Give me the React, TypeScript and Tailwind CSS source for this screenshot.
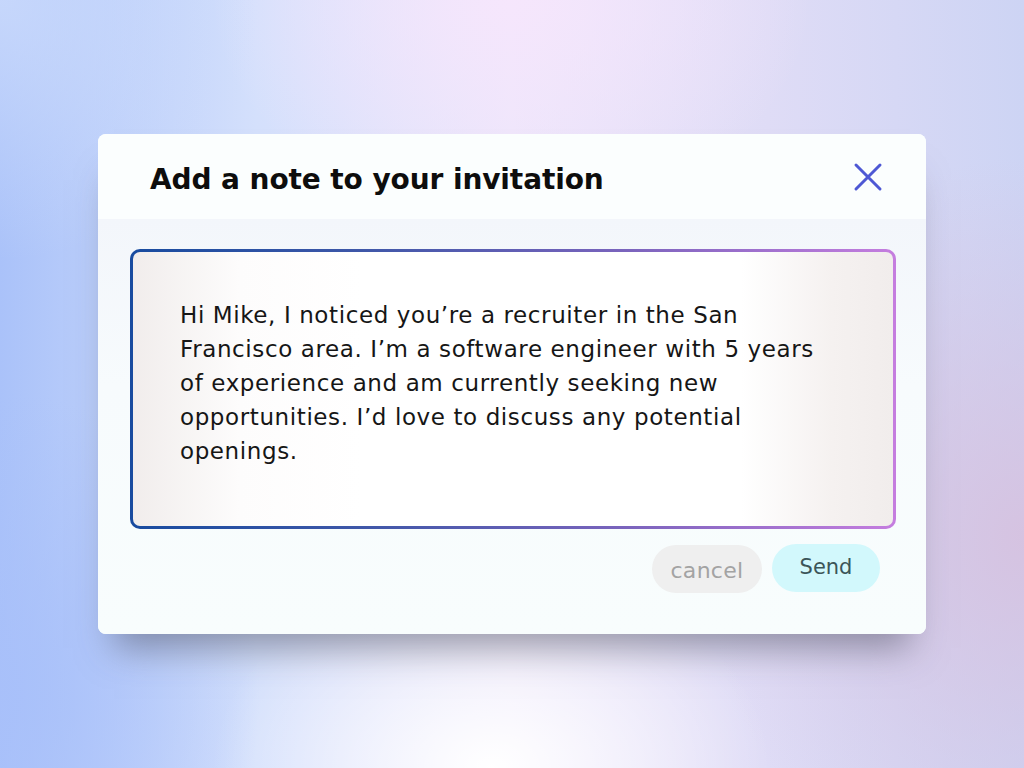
const lines = [
  'Hi Mike, I noticed you’re a recruiter in the San',
  'Francisco area. I’m a software engineer with 5 years',
  'of experience and am currently seeking new',
  'opportunities. I’d love to discuss any potential',
  'openings.',
]

export default function App() {
  return (
    <div className="relative flex h-[768px] w-full items-center justify-center overflow-hidden bg-[linear-gradient(90deg,#aac2f9_0%,#d4e0fc_25%,#ece6fb_50%,#dfdcf6_75%,#cdd4f4_100%)] font-['DejaVu_Sans',sans-serif]">
      {/* background glows */}
      <div className="pointer-events-none absolute inset-0 bg-[radial-gradient(ellipse_300px_220px_at_50%_0%,rgba(246,230,252,0.95),rgba(246,230,252,0)_100%)]" />
      <div className="pointer-events-none absolute inset-0 bg-[radial-gradient(ellipse_280px_200px_at_48%_100%,rgba(255,255,255,1),rgba(255,255,255,0)_100%)]" />
      <div className="pointer-events-none absolute inset-0 bg-[radial-gradient(ellipse_320px_380px_at_100%_70%,rgba(214,194,224,0.95),rgba(214,194,224,0)_100%)]" />
      <div className="pointer-events-none absolute inset-0 bg-[radial-gradient(ellipse_260px_300px_at_0%_90%,rgba(168,192,250,0.9),rgba(168,192,250,0)_100%)]" />
      <div className="pointer-events-none absolute inset-0 bg-[radial-gradient(ellipse_260px_260px_at_0%_0%,rgba(205,220,252,0.8),rgba(205,220,252,0)_100%)]" />

      <div className="relative flex h-[500px] w-[828px] flex-col overflow-hidden rounded-[8px] bg-[#f8fdfd] shadow-[0_30px_34px_-16px_rgba(70,72,90,0.5)]">
        {/* header */}
        <div className="flex h-[85px] items-center justify-between bg-[#fbfefe] pl-[52px] pr-[42px]">
          <h2 className="pt-[6px] text-[28px] font-bold tracking-[-0.1px] text-[#0d0d0d]">
            Add a note to your invitation
          </h2>
          <button type="button" aria-label="Close" className="flex h-8 w-8 items-center justify-center">
            <svg width="30" height="30" viewBox="0 0 30 30" fill="none">
              <path d="M3 3L27 27M27 3L3 27" stroke="#4e58d4" strokeWidth="3" strokeLinecap="round" />
            </svg>
          </button>
        </div>

        {/* body */}
        <div className="flex flex-1 flex-col bg-[linear-gradient(180deg,#f3f6fb_0%,#f7fbfd_40%,#f8fdfd_100%)] pl-[32px] pr-[30px] pt-[30px]">
          <div className="rounded-[10px] bg-[linear-gradient(90deg,#184b9f_0%,#3e57a8_30%,#7b64bd_65%,#c57ddf_100%)] p-[3px]">
            <div className="h-[274px] rounded-[7px] bg-[linear-gradient(90deg,#f1edec_0%,#fdfcfc_14%,#ffffff_30%,#ffffff_80%,#f5f1f0_92%,#f1edec_100%)] pl-[47px] pt-[46px]">
              <div className="text-[23px] leading-[34px] tracking-[0.6px] text-[#161616]">
                {lines.map((l) => (
                  <div key={l}>{l}</div>
                ))}
              </div>
            </div>
          </div>

          <div className="mt-[16px] flex justify-end gap-[10px] pr-[16px]">
            <button
              type="button"
              className="h-[48px] w-[110px] rounded-full bg-[#efefef] pt-[2px] text-[22px] tracking-[0.3px] text-[#a3a3a3]"
            >
              cancel
            </button>
            <button
              type="button"
              className="-mt-px h-[48px] w-[108px] rounded-full bg-[#d2f8fc] text-[21px] text-[#3b5558]"
            >
              Send
            </button>
          </div>
        </div>
      </div>
    </div>
  )
}
